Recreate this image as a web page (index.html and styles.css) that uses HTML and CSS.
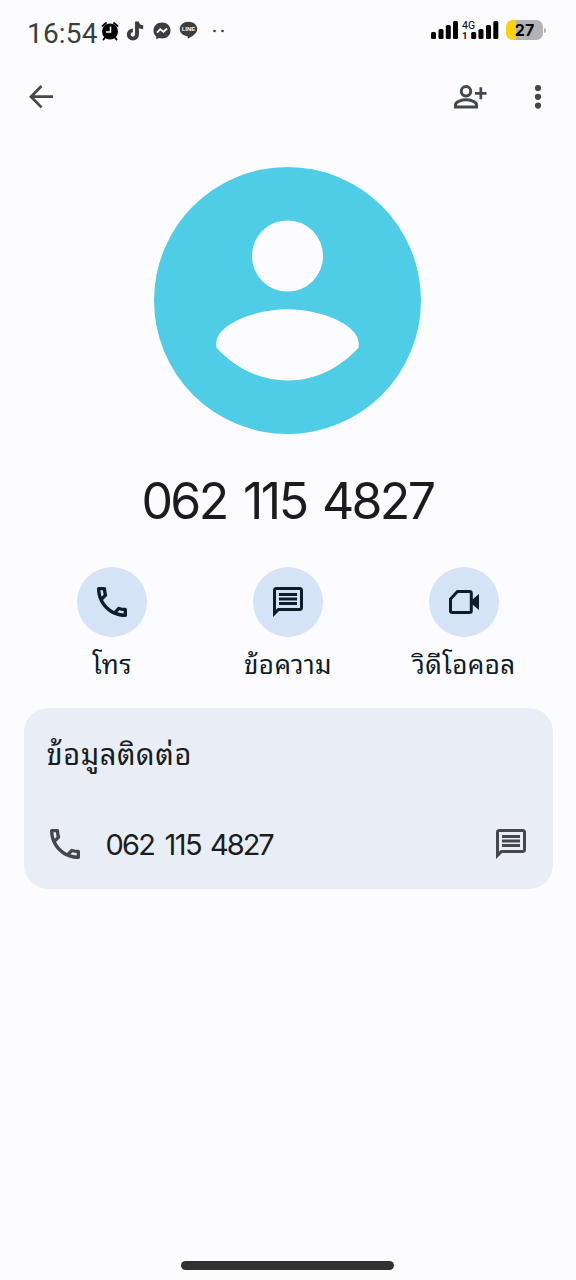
FILE: index.html
```html
<!DOCTYPE html>
<html lang="th">
<head>
<meta charset="utf-8">
<title>062 115 4827</title>
<link rel="stylesheet" href="styles.css">
</head>
<body>
<div class="screen">
  <header class="status">
    <span class="time">16:54</span>
    <svg class="alarm" width="18" height="20" viewBox="0 0 18 20"><circle cx="9" cy="10.500" r="8" fill="#000"/><path d="M1.500 5 5 2M16.500 5 13 2M4 16.500 2.500 18.500M14 16.500l1.500 2" stroke="#000" stroke-width="1.900" stroke-linecap="round"/><path d="M9.500 5.500V11H5" fill="none" stroke="#fff" stroke-width="1.500"/></svg>
    <svg class="tiktok" width="18" height="20" viewBox="0 0 18 20"><path d="M11 .5v13a4.100 4.100 0 1 1-4.100-4.100M11 .5c.2 3.500 2.300 5.500 6.200 5.700" fill="none" stroke="#3c3d41" stroke-width="3.900"/></svg>
    <svg class="messenger" width="18" height="18" viewBox="0 0 18 18"><path d="M9 .5C4 .5.500 4 .5 8.500c0 2.500 1 4.500 2.700 6v2.700l2.600-1.200c1 .3 2 .5 3.200.5 5 0 8.500-3.500 8.500-8S14 .5 9 .5z" fill="#3c3d41"/><path d="m4 10.700 3.200-3.400 3.300 2.500L14 6.500" fill="none" stroke="#fff" stroke-width="1.800"/></svg>
    <svg class="line" width="19" height="19" viewBox="0 0 19 19"><path d="M9.500.700C4.500.700.700 3.900.700 8c0 3.700 3.300 6.600 7.500 7.200.9.200.6 1.500.5 2.500C12 16.500 18.300 12.500 18.300 8c0-4.100-3.800-7.300-8.800-7.300z" fill="#3c3d41"/><text class="line-text" x="9.500" y="10.300" text-anchor="middle">LINE</text></svg>
    <svg class="more-dots" width="14" height="4" viewBox="0 0 14 4"><circle cx="2.500" cy="2" r="1.300"/><circle cx="10.500" cy="2" r="1.300"/></svg>
    <svg class="signal" width="70" height="22" viewBox="0 0 70 22"><g fill="#000"><rect x="1" y="13" width="5" height="7" rx="1.500"/><rect x="8.500" y="10" width="5" height="10" rx="1.500"/><rect x="15.800" y="6" width="5" height="14" rx="1.500"/><rect x="23" y="2" width="5" height="18" rx="1.500"/><rect x="41.200" y="13" width="5" height="7" rx="1.500"/><rect x="48.500" y="10" width="5" height="10" rx="1.500"/><rect x="56" y="6" width="5" height="14" rx="1.500"/><rect x="63.300" y="2" width="5" height="18" rx="1.500"/></g><text class="net" x="32" y="9.500">4G</text><text class="sim" x="32.300" y="20">1</text></svg>
    <div class="battery"><span>27</span></div>
    <i class="nub"></i>
  </header>
  <nav class="appbar">
    <svg class="back" width="26" height="26" viewBox="0 0 26 26"><path d="M25 12.700H3M13.500 2 3 12.700l10.500 10.700" fill="none" stroke="#44474c" stroke-width="2.700"/></svg>
    <svg class="add" width="34" height="26" viewBox="0 0 34 26"><g fill="none" stroke="#44474c" stroke-width="3"><circle cx="12" cy="7.300" r="4.700"/><path d="M1.500 23.100v-2.300c0-3.200 6.400-5 10.500-5s10.500 1.800 10.500 5v2.300z"/><path d="M26.800 3.300v12M21 9.300H32.500" stroke-width="2.700"/></g></svg>
    <svg class="kebab" width="8" height="26" viewBox="0 0 8 26"><circle cx="4" cy="4" r="3.100"/><circle cx="4" cy="12.800" r="3.100"/><circle cx="4" cy="21.600" r="3.100"/></svg>
  </nav>
  <svg class="avatar" viewBox="0 0 267 267"><circle cx="133.500" cy="133.500" r="133.500" fill="#4fcde6"/><circle cx="133.500" cy="89" r="35.600" fill="#fcfcff"/><path d="M62.300 180.500v-4c0-19 38-34.300 71.200-34.300s71.200 15.300 71.200 34.300v4c-19 20.500-43 33-71.200 33s-52.200-12.500-71.200-33z" fill="#fcfcff"/></svg>
  <h1 class="number"><span>062</span> <span class="ones">115</span> <span>4827</span></h1>
  <div class="actions">
    <div class="action"><div class="disc"><svg width="40" height="40" viewBox="0 0 24 24"><path d="M6.540 5c.06.890.210 1.760.450 2.590l-1.200 1.200c-.41-1.200-.67-2.470-.76-3.790h1.510m9.860 12.020c.85.240 1.720.390 2.600.450v1.490c-1.320-.09-2.590-.35-3.800-.75l1.200-1.190M7.500 3H4c-.55 0-1 .45-1 1 0 9.390 7.610 17 17 17 .55 0 1-.45 1-1v-3.490c0-.55-.45-1-1-1-1.240 0-2.450-.2-3.570-.57a.84.840 0 0 0-.31-.05c-.26 0-.51.100-.71.290l-2.200 2.200a15.150 15.150 0 0 1-6.590-6.590l2.200-2.200c.28-.28.360-.67.250-1.020A11.360 11.360 0 0 1 8.500 4c0-.55-.45-1-1-1z"/></svg></div><span>โทร</span></div>
    <div class="action"><div class="disc"><svg width="36" height="36" viewBox="0 0 24 24"><path d="M4 4h16v12H5.200L4 17.200V4m0-2c-1.100 0-2 .9-2 2v18l4-4h14c1.100 0 2-.9 2-2V4c0-1.100-.9-2-2-2H4zm2 10h12v2H6v-2zm0-3h12v2H6V9zm0-3h12v2H6V6z"/></svg></div><span>ข้อความ</span></div>
    <div class="action"><div class="disc"><svg width="32" height="26" viewBox="0 0 32 26"><path d="M9.500 2.500H21.500Q23.300 2.500 23.300 4.300V21.700Q23.300 23.500 21.500 23.500H4.300Q2.500 23.500 2.500 21.700V10z" fill="none" stroke="#0e1d2a" stroke-width="3"/><path d="M23.500 11.200 31 5v16l-7.500-6.200z"/></svg></div><span>วิดีโอคอล</span></div>
  </div>
  <section class="card">
    <h2>ข้อมูลติดต่อ</h2>
    <div class="row">
      <svg width="40" height="40" viewBox="0 0 24 24"><path d="M6.540 5c.06.890.210 1.760.450 2.590l-1.200 1.200c-.41-1.200-.67-2.470-.76-3.790h1.510m9.860 12.020c.85.240 1.720.390 2.600.450v1.490c-1.320-.09-2.590-.35-3.800-.75l1.200-1.190M7.500 3H4c-.55 0-1 .45-1 1 0 9.390 7.610 17 17 17 .55 0 1-.45 1-1v-3.490c0-.55-.45-1-1-1-1.240 0-2.450-.2-3.570-.57a.84.840 0 0 0-.31-.05c-.26 0-.51.100-.71.290l-2.200 2.200a15.150 15.150 0 0 1-6.590-6.590l2.200-2.200c.28-.28.360-.67.250-1.020A11.360 11.360 0 0 1 8.500 4c0-.55-.45-1-1-1z"/></svg>
      <div class="row-number"><span>062</span> <span class="ones">115</span> <span>4827</span></div>
      <svg class="chat" width="36" height="36" viewBox="0 0 24 24"><path d="M4 4h16v12H5.200L4 17.200V4m0-2c-1.100 0-2 .9-2 2v18l4-4h14c1.100 0 2-.9 2-2V4c0-1.100-.9-2-2-2H4zm2 10h12v2H6v-2zm0-3h12v2H6V9zm0-3h12v2H6V6z"/></svg>
    </div>
  </section>
  <div class="home"></div>
</div>
</body>
</html>
```
FILE: styles.css
```css
* { box-sizing: border-box; }
body { margin: 0; background: #fcfcff; color: #1a1c1e; }
svg { display: block; flex: none; }
.screen { width: 576px; height: 1280px; display: flex; flex-direction: column; overflow: hidden; }
.status { height: 60px; display: flex; align-items: center; padding-left: 27px; flex: none; }
.time { font: 28px/34px Roboto, sans-serif; color: #3c3d41; width: 74px; margin-top: 7px; letter-spacing: .2px; }
.alarm { margin-top: 1px; }
.tiktok { margin: 1px 0 0 7px; }
.messenger { margin: 1px 0 0 9px; }
.line { margin: 1px 0 0 8px; }
.line-text { font: bold 6px "Liberation Sans", sans-serif; fill: #fff; }
.more-dots { margin: 2px 0 0 14px; fill: #3c3d41; }
.signal { margin-left: 204px; margin-top: 0; }
.net { font: 10.500px Roboto, sans-serif; }
.sim { font: bold 9px Roboto, sans-serif; }
.battery { margin: 0 0 0 6px; width: 37px; height: 20px; border-radius: 6.500px; background: linear-gradient(90deg, #fbd20b 10px, #b3b3b5 10px); font: bold 16px/20px Inter, sans-serif; text-align: center; color: #000; }
.nub { width: 2px; height: 5px; background: #b3b3b5; border-radius: 0 2px 2px 0; margin-left: 1px; }
.appbar { height: 74px; display: flex; align-items: center; padding-left: 28px; flex: none; }
.add { margin-left: 400px; }
.kebab { margin-left: 46px; fill: #44474c; }
.avatar { width: 267px; height: 267px; margin: 33px 0 0 154px; }
.number { display: flex; font: 400 50px/60px Inter, sans-serif; margin: 37px 0 0 141.500px; white-space: nowrap; height: 60px; }
.number span { width: 101.500px; letter-spacing: -2.700px; }
.number .ones { width: 79px; letter-spacing: -2.500px; }
.actions { display: grid; grid-template-columns: repeat(3, 176px); margin: 36px 0 0 24px; }
.action { display: flex; flex-direction: column; align-items: center; height: 141px; font: 26px/36px "Noto Sans Thai Looped", Loma, Garuda, Waree, "Liberation Sans", sans-serif; letter-spacing: .4px; color: #0e1d2a; fill: #0e1d2a; }
.disc { width: 70px; height: 70px; border-radius: 50%; background: #d4e3f6; display: flex; align-items: center; justify-content: center; margin-bottom: 7px; flex: none; }
.card { width: 529px; height: 181px; margin-left: 23.500px; border-radius: 24px; background: #e9eef6; padding: 25px 24px 0 24px; }
.card h2 { font: 400 29px/38px "Noto Sans Thai Looped", Loma, Garuda, Waree, "Liberation Sans", sans-serif; letter-spacing: .6px; margin: 0 0 0 -1px; height: 38px; }
.row { display: flex; align-items: center; height: 40px; margin-top: 53px; margin-left: -3px; fill: #44474c; }
.row-number { display: flex; font: 29px/40px Inter, sans-serif; margin: 1px 0 0 21px; white-space: nowrap; }
.row-number span { width: 59px; letter-spacing: -1.800px; }
.row-number .ones { width: 45.500px; letter-spacing: -1.500px; }
.row-number span:last-child { width: 70px; letter-spacing: -2px; }
.chat { margin-left: auto; margin-right: 0; }
.home { width: 213px; height: 9px; background: #313131; border-radius: 5px; margin: auto 0 10px 181px; }
```
